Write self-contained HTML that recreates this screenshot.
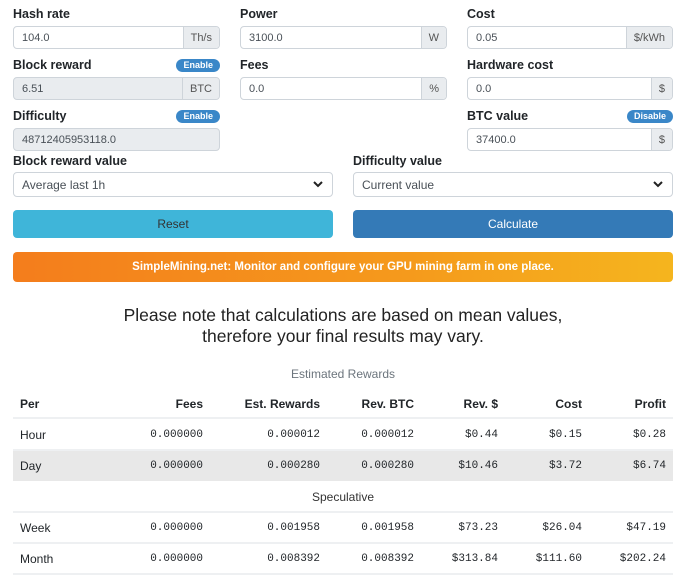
<!DOCTYPE html>
<html><head><meta charset="utf-8"><style>
*{box-sizing:border-box;margin:0;padding:0}
body{width:700px;height:580px;background:#fff;font-family:"Liberation Sans",sans-serif;color:#212529;position:relative;overflow:hidden}
.a{position:absolute}
.lbl{font-weight:bold;font-size:12.5px}
.inp{position:absolute;height:23px;border:1px solid #ced4da;border-radius:4px;font-size:11px;color:#495057;display:flex;overflow:hidden;background:#fff}
.inp .v{flex:1;padding:5px 8px}
.inp .u{background:#e9ecef;border-left:1px solid #ced4da;padding:5px 7px;color:#555}
.dis{background:#e9ecef}
.badge{position:absolute;background:#3a87c8;color:#fff;font-weight:bold;font-size:9px;border-radius:7px;height:13px;line-height:13px;padding:0 7px}
.sel{position:absolute;height:25px;border:1px solid #ced4da;border-radius:4px;font-size:12px;color:#495057;padding:5px 8px}
.sel svg{position:absolute;right:9px;top:8px}
.btn{position:absolute;height:28px;border-radius:4px;font-size:12px;text-align:center;line-height:28px}
.r{position:absolute;font-size:12px}
.m{font-family:"Liberation Mono",monospace;font-size:11px}
.hr{position:absolute;left:13px;width:660px;height:2px;background:#eef0f2}
</style></head><body>
<div class="a lbl" style="left:13px;top:7px">Hash rate</div>
<div class="a lbl" style="left:240px;top:7px">Power</div>
<div class="a lbl" style="left:467px;top:7px">Cost</div>
<div class="inp" style="left:13px;top:26px;width:207px"><div class="v">104.0</div><div class="u">Th/s</div></div>
<div class="inp" style="left:240px;top:26px;width:207px"><div class="v">3100.0</div><div class="u">W</div></div>
<div class="inp" style="left:467px;top:26px;width:206px"><div class="v">0.05</div><div class="u">$/kWh</div></div>

<div class="a lbl" style="left:13px;top:58px">Block reward</div>
<div class="badge" style="right:480px;top:59px">Enable</div>
<div class="a lbl" style="left:240px;top:58px">Fees</div>
<div class="a lbl" style="left:467px;top:58px">Hardware cost</div>
<div class="inp dis" style="left:13px;top:77px;width:207px"><div class="v">6.51</div><div class="u">BTC</div></div>
<div class="inp" style="left:240px;top:77px;width:207px"><div class="v">0.0</div><div class="u">%</div></div>
<div class="inp" style="left:467px;top:77px;width:206px"><div class="v">0.0</div><div class="u">$</div></div>

<div class="a lbl" style="left:13px;top:109px">Difficulty</div>
<div class="badge" style="right:480px;top:110px">Enable</div>
<div class="a lbl" style="left:467px;top:109px">BTC value</div>
<div class="badge" style="right:27px;top:110px">Disable</div>
<div class="inp dis" style="left:13px;top:128px;width:207px"><div class="v">48712405953118.0</div></div>
<div class="inp" style="left:467px;top:128px;width:206px"><div class="v">37400.0</div><div class="u">$</div></div>

<div class="a lbl" style="left:13px;top:154px">Block reward value</div>
<div class="a lbl" style="left:353px;top:154px">Difficulty value</div>
<div class="sel" style="left:13px;top:172px;width:320px">Average last 1h<svg width="10" height="7" viewBox="0 0 10 7"><path d="M1 1l4 4 4-4" stroke="#222" stroke-width="2" fill="none"/></svg></div>
<div class="sel" style="left:353px;top:172px;width:320px">Current value<svg width="10" height="7" viewBox="0 0 10 7"><path d="M1 1l4 4 4-4" stroke="#222" stroke-width="2" fill="none"/></svg></div>

<div class="btn" style="left:13px;top:210px;width:320px;background:#3fb5d9;color:#333">Reset</div>
<div class="btn" style="left:353px;top:210px;width:320px;background:#347ab7;color:#fff">Calculate</div>

<div class="a" style="left:13px;top:252px;width:660px;height:30px;border-radius:4px;background:linear-gradient(90deg,#f47d1c,#f59a1c 60%,#f5b51e);color:#fff;font-weight:bold;font-size:11.5px;text-align:center;line-height:30px">SimpleMining.net: Monitor and configure your GPU mining farm in one place.</div>

<div class="a" style="left:0;top:305px;width:686px;text-align:center;font-size:17.5px;line-height:21px;color:#222">Please note that calculations are based on mean values,<br>therefore your final results may vary.</div>

<div class="a" style="left:0;top:367px;width:686px;text-align:center;font-size:12px;color:#6c757d">Estimated Rewards</div>

<div class="r lbl" style="left:20px;top:397px;font-size:12px">Per</div>
<div class="r lbl" style="right:497px;top:397px;font-size:12px">Fees</div>
<div class="r lbl" style="right:380px;top:397px;font-size:12px">Est. Rewards</div>
<div class="r lbl" style="right:286px;top:397px;font-size:12px">Rev. BTC</div>
<div class="r lbl" style="right:202px;top:397px;font-size:12px">Rev. $</div>
<div class="r lbl" style="right:118px;top:397px;font-size:12px">Cost</div>
<div class="r lbl" style="right:34px;top:397px;font-size:12px">Profit</div>
<div class="hr" style="top:417px"></div>

<div class="a" style="left:13px;top:450px;width:660px;height:31px;background:#e8e8e8"></div>
<div class="hr" style="top:449px"></div>
<div class="hr" style="top:511px"></div>
<div class="hr" style="top:542px"></div>
<div class="hr" style="top:573px"></div>
<div class="a" style="left:0;top:490px;width:686px;text-align:center;font-size:12px;color:#333">Speculative</div>

<div class="r" style="left:20px;top:428px">Hour</div>
<div class="r m" style="right:497px;top:429px">0.000000</div>
<div class="r m" style="right:380px;top:429px">0.000012</div>
<div class="r m" style="right:286px;top:429px">0.000012</div>
<div class="r m" style="right:202px;top:429px">$0.44</div>
<div class="r m" style="right:118px;top:429px">$0.15</div>
<div class="r m" style="right:34px;top:429px">$0.28</div>

<div class="r" style="left:20px;top:459px">Day</div>
<div class="r m" style="right:497px;top:460px">0.000000</div>
<div class="r m" style="right:380px;top:460px">0.000280</div>
<div class="r m" style="right:286px;top:460px">0.000280</div>
<div class="r m" style="right:202px;top:460px">$10.46</div>
<div class="r m" style="right:118px;top:460px">$3.72</div>
<div class="r m" style="right:34px;top:460px">$6.74</div>

<div class="r" style="left:20px;top:521px">Week</div>
<div class="r m" style="right:497px;top:522px">0.000000</div>
<div class="r m" style="right:380px;top:522px">0.001958</div>
<div class="r m" style="right:286px;top:522px">0.001958</div>
<div class="r m" style="right:202px;top:522px">$73.23</div>
<div class="r m" style="right:118px;top:522px">$26.04</div>
<div class="r m" style="right:34px;top:522px">$47.19</div>

<div class="r" style="left:20px;top:552px">Month</div>
<div class="r m" style="right:497px;top:553px">0.000000</div>
<div class="r m" style="right:380px;top:553px">0.008392</div>
<div class="r m" style="right:286px;top:553px">0.008392</div>
<div class="r m" style="right:202px;top:553px">$313.84</div>
<div class="r m" style="right:118px;top:553px">$111.60</div>
<div class="r m" style="right:34px;top:553px">$202.24</div>
</body></html>
